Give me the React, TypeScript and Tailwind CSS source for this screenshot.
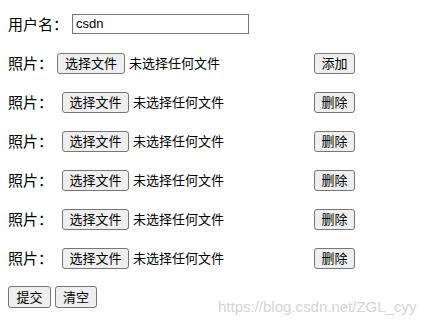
const label = "text-[15px] leading-[22px] text-black";
const btn =
    "flex h-[21px] items-center justify-center rounded-[3px] border border-[#767676] bg-[#efefef] text-[13px] text-black";

function PhotoRow({ first }: { first?: boolean }) {
    return (
        <div className="flex h-[22px] w-[347px] items-center">
            <span className={label}>照片：</span>
            <button className={`${btn} ${first ? "ml-[4px] w-[68px]" : "ml-[9px] w-[67px]"}`}>选择文件</button>
            <span className="ml-[4px] text-[13px] text-black">未选择任何文件</span>
            <button className={`${btn} ml-auto w-[41px]`}>{first ? "添加" : "删除"}</button>
        </div>
    );
}

export default function App() {
    return (
        <div
            className="relative h-[326px] w-[436px] overflow-hidden bg-white pl-[8px] pt-[13px]"
            style={{ fontFamily: '"Noto Sans CJK SC", "Liberation Sans", sans-serif' }}
        >
            <div className="flex flex-col gap-[17px]">
                {/* 用户名 */}
                <div className="flex h-[22px] items-center">
                    <span className={label}>用户名：</span>
                    <div className="ml-[4px] flex h-[20px] w-[177px] items-center border border-[#767676] px-[3px] font-['Liberation_Sans'] text-[13px] text-black">
                        csdn
                    </div>
                </div>
                {/* 照片 rows */}
                <PhotoRow first />
                {Array.from({ length: 5 }).map((_, i) => (
                    <PhotoRow key={i} />
                ))}
                {/* 提交 / 清空 */}
                <div className="flex h-[22px] items-center gap-[4px]">
                    <button className={`${btn} h-[22px] w-[43px]`}>提交</button>
                    <button className={`${btn} h-[22px] w-[42px]`}>清空</button>
                </div>
            </div>
            {/* watermark */}
            <div className="absolute left-[218px] top-[296px] font-['Liberation_Sans'] text-[15px] leading-[22px] text-[#d4d4d4]">
                https://blog.csdn.net/ZGL_cyy
            </div>
        </div>
    );
}
